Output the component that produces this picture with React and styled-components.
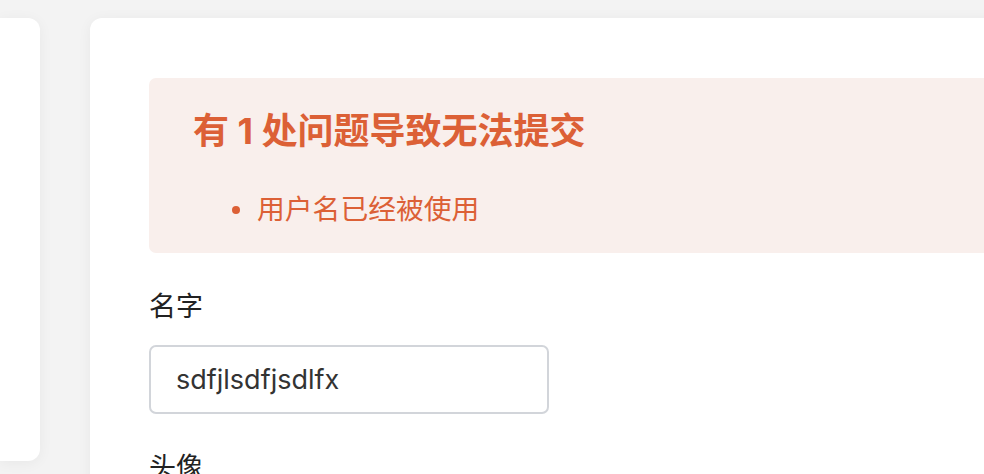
import styled, { createGlobalStyle } from 'styled-components'

const GlobalStyle = createGlobalStyle`
  html, body {
    margin: 0;
    padding: 0;
    background: #f3f3f3;
    overflow: hidden;
  }
  body {
    font-family: Inter, "Noto Sans CJK SC", sans-serif;
  }
`

const PageStyle = styled.div`
  display: grid;
  grid-template-columns: 40px 1000px;
  column-gap: 50px;
  align-items: start;
  padding-top: 18px;
  height: 474px;
  box-sizing: border-box;
`

const SideCard = styled.aside`
  height: 443px;
  background: #ffffff;
  border-radius: 0 12px 12px 0;
  box-shadow: 0 2px 14px rgba(0, 0, 0, 0.05);
`

const MainCard = styled.main`
  min-height: 520px;
  background: #ffffff;
  border-radius: 12px 0 0 12px;
  box-shadow: 0 2px 14px rgba(0, 0, 0, 0.05);
  padding: 60px 0 0 59px;
  box-sizing: border-box;
`

const ErrorBox = styled.section`
  background: #f9efec;
  border-radius: 7px;
  padding: 31px 44px 24px 44px;
  color: #dc6036;
`

const ErrorTitle = styled.h2`
  margin: 0;
  font-family: Inter, "Noto Sans CJK SC", sans-serif;
  font-size: 36px;
  line-height: 44px;
  font-weight: 700;
`

const ErrorList = styled.ul`
  list-style: none;
  margin: 36px 0 0 0;
  padding: 0 0 0 39px;
`

const ErrorItem = styled.li`
  position: relative;
  padding-left: 25px;
  font-size: 27.8px;
  line-height: 40px;

  &::before {
    content: "";
    position: absolute;
    left: 0;
    top: 17px;
    width: 8px;
    height: 8px;
    border-radius: 50%;
    background: currentColor;
  }
`

const Field = styled.div`
  display: flex;
  flex-direction: column;
  gap: 24px;
  margin-top: ${p => p.$top}px;
`

const Label = styled.label`
  font-size: 27px;
  line-height: 28px;
  color: #222222;
`

const TextInput = styled.input`
  width: 400px;
  height: 69px;
  box-sizing: border-box;
  border: 2px solid #d2d5da;
  border-radius: 7px;
  padding: 0 25px;
  font-family: Inter, "Noto Sans CJK SC", sans-serif;
  font-size: 27px;
  color: #333333;
  background: #ffffff;
  outline: none;
`

export default function App() {
  return (
    <>
      <GlobalStyle />
      <PageStyle>
        <SideCard />
        <MainCard>
          <ErrorBox>
            <ErrorTitle>有 1 处问题导致无法提交</ErrorTitle>
            <ErrorList>
              <ErrorItem>用户名已经被使用</ErrorItem>
            </ErrorList>
          </ErrorBox>
          <Field $top={40}>
            <Label>名字</Label>
            <TextInput defaultValue="sdfjlsdfjsdlfx" />
          </Field>
          <Field $top={40}>
            <Label>头像</Label>
          </Field>
        </MainCard>
      </PageStyle>
    </>
  )
}
